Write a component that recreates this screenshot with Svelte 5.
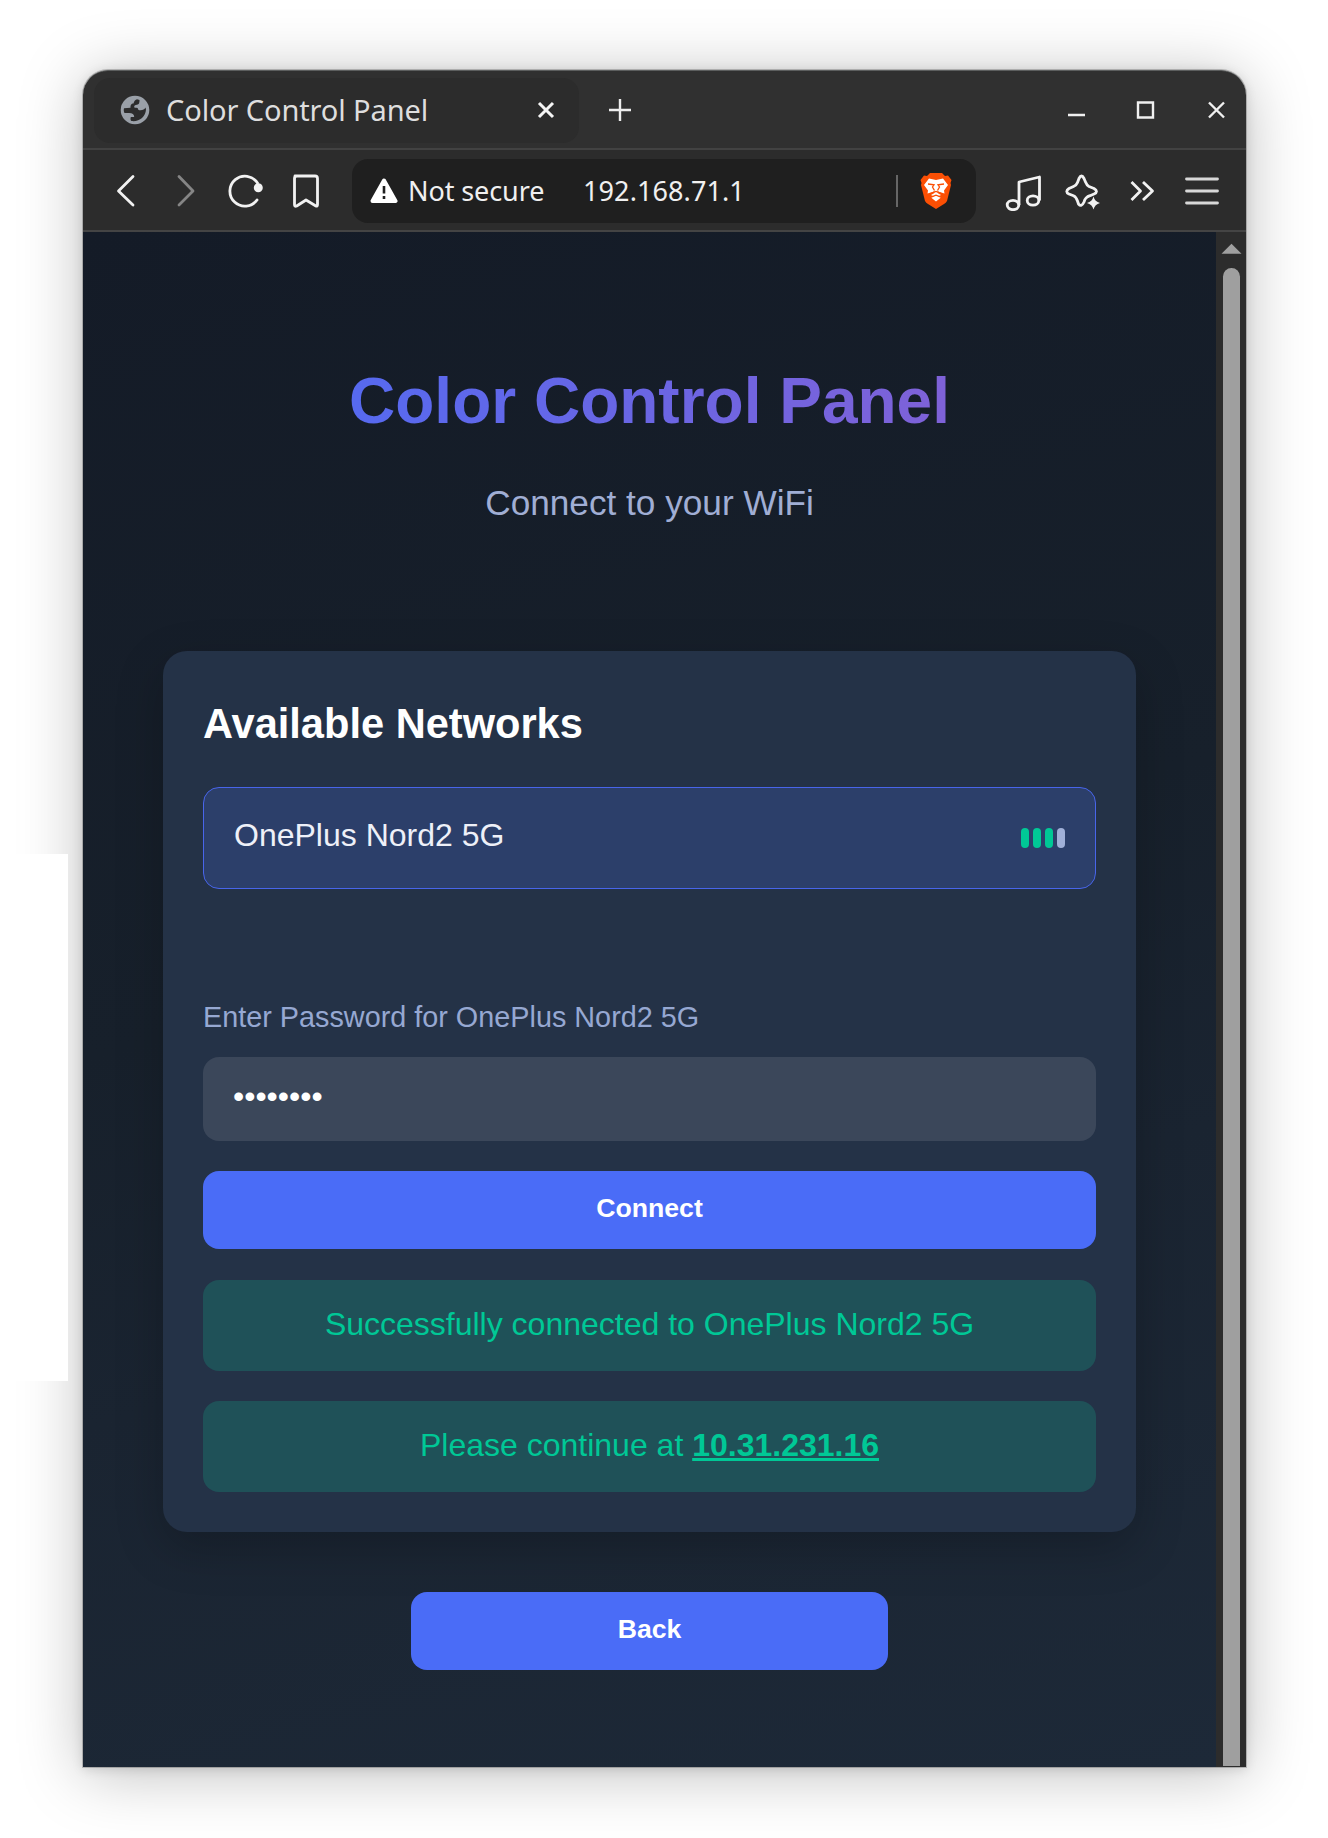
<script>
  const bars = [true, true, true, false];
  const network = 'OnePlus Nord2 5G';
  let password = $state('12345678');
</script>

<div class="desk">
  <div class="patch"></div>
  <div class="window">
    <header class="tabs">
      <div class="tab">
        <svg class="globe" width="30" height="30" viewBox="0 0 30 30">
          <circle cx="15" cy="15" r="14.3" fill="#9aa0a8" />
          <path d="M17 4.200 C14.500 5 14 6.500 13.500 8.500 C10.500 8.500 10.500 11 10.500 12.800 L4 13.200 C3.500 15 3.800 16.500 4.500 18 L9 18 C12.500 18 14.200 19.300 14.200 22 L10.800 22 C10.200 24 10.500 25.500 11.500 26 C19 27 25.500 22 26 14.500 L25.500 12.500 C24.500 14.500 23 15.200 20.500 15.200 C18.500 15.200 18 14.800 17.700 12.900 C15 12.800 14.500 12.500 14.200 12.200 C14.200 10.500 14.800 10 17 9.800 C19 9.500 19.500 8 19.500 5 Z" fill="#2c2c2c" />
        </svg>
        <span class="tabname">Color Control Panel</span>
        <svg class="tabx" width="18" height="18" viewBox="0 0 18 18"><path d="M2 2 16 16M16 2 2 16" /></svg>
      </div>
      <svg class="plus" width="24" height="24" viewBox="0 0 24 24"><path d="M12 1V23M1 12H23" /></svg>
      <svg class="controls" width="160" height="20" viewBox="0 0 160 20">
        <path d="M1 15H18M71 2.500H86V17.500H71ZM142 2.500 157 17.500M157 2.500 142 17.500" />
      </svg>
    </header>
    <nav class="toolbar">
      <svg class="navicons" width="216" height="40" viewBox="0 0 216 40">
        <g fill="none" stroke="#f2f2f2" stroke-width="2.800" stroke-linecap="round" stroke-linejoin="round">
          <path d="M22 5.500 7.500 20 22 34" />
          <path d="M68 5.500 82 20 68 34" stroke="#858585" />
          <path d="M146 29 A15 15 0 1 1 146.500 12" />
          <path d="M184 5 H204 Q206.500 5 206.500 7.500 V33.500 Q206.500 36 204.500 34.800 L195 29 185.700 35 Q183.500 36 183.500 33.500 V7.500 Q183.500 5 186 5" />
        </g>
        <circle cx="147.300" cy="16.800" r="4.500" fill="#f2f2f2" />
      </svg>
      <div class="address">
        <svg width="28" height="26" viewBox="0 0 28 26">
          <path d="M14 2.500 25.500 23 H2.500Z" fill="#fff" stroke="#fff" stroke-width="4" stroke-linejoin="round" />
          <path d="M14 8V15.500M14 18V21" stroke="#1f1f1f" stroke-width="2.600" />
        </svg>
        <span class="insecure">Not secure</span>
        <span class="ip">192.168.71.1</span>
        <i class="divider"></i>
        <svg class="lion" width="32" height="37" viewBox="0 0 32 37">
          <path d="M10 1H22L25 4 28 3.500 31.500 8 30.500 11 31 13 27 29 Q26 31 24 32 L16 37 8 32 Q6 31 5 29 L1 13 1.500 11 .5 8 4 3.500 7 4Z" fill="#fb4f04" />
          <path d="M9 6.500 16 8 23 6.500 28 13 24 18.500 24.500 21.500 19.500 20 17.500 19 V21 L21 23 16 25.500 11 23 14.500 21 V19 L12.500 20 7.500 21.500 8 18.500 4 13Z M11 25.500 16 23.500 21 25.500 16 29.500Z" fill="#fff" />
          <path d="M8 12 14 12.800 12.500 15 14.500 18.500M24 12 18 12.800 19.500 15 17.500 18.500M10.500 21.500 16 19.500 21.500 21.500M11 25.200 16 23.200 21 25.200" fill="none" stroke="#fb4f04" stroke-width="1.300" />
        </svg>
      </div>
      <svg class="actions" width="216" height="40" viewBox="0 0 216 40">
        <g fill="none" stroke="#f2f2f2" stroke-width="2.800" stroke-linejoin="round">
          <path d="M14 34V11L34.500 6V29.500" />
          <ellipse cx="8" cy="34" rx="5.800" ry="4.700" />
          <ellipse cx="28" cy="29.500" rx="5.800" ry="4.700" />
          <path d="M73.500 33 Q76.500 36.500 79 31 C80 27.500 81 26 85 24.700 L89 23 Q94 20.500 89 17.500 L84 15.500 C82 14.500 81.500 13.500 80.500 11 L79 7.500 Q76.500 2.500 74 7.500 L72.500 11.500 C71.500 14 71 14.500 68.500 15.500 L64 17.500 Q59.500 20.500 64 23 L68.500 24.700 C70.500 25.500 71.500 27 72.500 30 Z" />
          <path d="M126.500 11 135.500 20 126.500 29M138 11 147.500 20 138 29" />
          <path d="M181.500 8H212.500M181.500 20H212.500M181.500 32H212.500" stroke="#d8d8d8" stroke-linecap="round" />
        </g>
        <path d="M88.500 25.500Q89.800 30.700 95 32Q89.800 33.300 88.500 38.500Q87.200 33.300 82 32Q87.200 30.700 88.500 25.500Z" fill="#f2f2f2" />
      </svg>
    </nav>
    <div class="view">
      <main>
        <h1>Color Control Panel</h1>
        <p class="sub">Connect to your WiFi</p>
        <section class="card">
          <h2>Available Networks</h2>
          <div class="network">
            <span>{network}</span>
            <div class="signal">
              {#each bars as on}<i class:on></i>{/each}
            </div>
          </div>
          <label for="pw">Enter Password for {network}</label>
          <input id="pw" type="password" bind:value={password} />
          <button>Connect</button>
          <div class="notice">Successfully connected to {network}</div>
          <div class="notice">Please continue at <a href="#continue">10.31.231.16</a></div>
        </section>
        <button class="back">Back</button>
      </main>
      <aside class="scroll">
        <svg width="21" height="11" viewBox="0 0 22 11"><path d="M0.500 11 11 0.500 21.500 11Z" fill="#9f9f9f" /></svg>
        <div class="thumb"></div>
      </aside>
    </div>
  </div>
</div>

<style>
  :global(body) { margin: 0; background: #fff; }
  * { box-sizing: border-box; }
  .desk {
    position: relative;
    width: 1328px;
    height: 1838px;
    padding: 70px 82px 71px 83px;
    overflow: hidden;
    background: #fff;
    font-family: "Liberation Sans", Arial, sans-serif;
  }
  .patch { position: absolute; z-index: 1; left: 0; top: 854px; width: 68px; height: 527px; background: #fff; }
  .window {
    height: 1697px;
    border-radius: 25px 25px 0 0;
    box-shadow: 0 6px 64px rgba(0, 0, 0, 0.26), 0 2px 12px rgba(0, 0, 0, 0.13), 0 0 0 1px rgba(0, 0, 0, 0.2);
  }
  .tabs {
    display: flex;
    align-items: center;
    height: 80px;
    padding: 1px 19px 0 11px;
    background: #303030;
    border-top: 1px solid #5c5e5e;
    border-bottom: 2px solid #424242;
    border-radius: 25px 25px 0 0;
  }
  .tab {
    display: flex;
    align-items: center;
    width: 485px;
    height: 65px;
    padding: 0 24px 0 26px;
    background: #2c2c2c;
    border-radius: 16px;
  }
  .tabname { margin: -2px 0 0 16px; font: 29px "Noto Sans", sans-serif; letter-spacing: -0.110px; color: #dedede; white-space: nowrap; }
  .tabx { margin-left: auto; stroke: #f5f5f5; stroke-width: 3; }
  .plus { margin-left: 29px; stroke: #eee; stroke-width: 2.400; }
  .controls { margin-left: auto; fill: none; stroke: #f0f0f0; stroke-width: 2.400; }
  .toolbar {
    display: flex;
    align-items: center;
    height: 82px;
    padding: 1px 25px 0 28px;
    background: #2c2c2c;
    border-bottom: 2px solid #444;
  }
  .navicons { margin-right: 25px; }
  .address {
    display: flex;
    align-items: center;
    width: 624px;
    height: 64px;
    padding: 0 24px 0 18px;
    border-radius: 16px;
    background: #1f1f1f;
    color: #f0f0f0;
    font: 27px "Noto Sans", sans-serif;
    white-space: nowrap;
  }
  .insecure { width: 175px; margin-left: 10px; letter-spacing: -0.100px; }
  .ip { letter-spacing: 0.100px; }
  .divider { width: 2px; height: 32px; margin-left: auto; background: #666; }
  .lion { margin-left: 22px; }
  .actions { margin-left: auto; }
  .view { display: flex; height: 1535px; }
  main {
    display: flex;
    flex-direction: column;
    align-items: center;
    width: 1133px;
    padding: 131px 80px 0;
    background: linear-gradient(165deg, #141b27 0%, #17202b 45%, #1a2431 65%, #1d2938 100%);
  }
  h1 {
    width: 973px;
    margin: 0;
    font-size: 64px;
    line-height: 76px;
    text-align: center;
    background: linear-gradient(90deg, #4a6cf7, #8b5fd0);
    background-clip: text;
    color: transparent;
  }
  .sub { margin: 43px 0 0; font-size: 35.200px; line-height: 42px; color: #a0aed4; }
  .card {
    display: flex;
    flex-direction: column;
    width: 973px;
    height: 881px;
    margin-top: 127px;
    padding: 40px;
    border-radius: 24px;
    background: #243247;
    box-shadow: 0 16px 48px rgba(0, 0, 0, 0.22);
  }
  h2 { margin: 9px 0 0; font-size: 41.600px; line-height: 48px; color: #fff; }
  .network {
    display: flex;
    align-items: center;
    justify-content: space-between;
    height: 102px;
    margin-top: 39px;
    padding: 0 30px 4px 30px;
    border: 1.500px solid #4865ea;
    border-radius: 16px;
    background: #2c3f6a;
    font-size: 32px;
    color: #eef0f8;
  }
  .signal { display: flex; gap: 3.500px; padding-top: 4px; }
  .signal i { width: 8.500px; height: 20px; border-radius: 4.250px; background: #a0b0d8; }
  .signal .on { background: #00c896; }
  label { margin-top: 111px; font-size: 28.800px; line-height: 34px; color: #96a8d2; }
  input {
    height: 84px;
    margin-top: 23px;
    padding: 0 30px 4px;
    border: 0;
    border-radius: 16px;
    outline: 0;
    background: #3b475a;
    color: #fff;
    font: 32px "Liberation Sans", sans-serif;
  }
  button {
    height: 79px;
    margin-top: 30px;
    padding: 0 0 3px;
    border: 0;
    border-radius: 16px;
    background: #4a6cf7;
    color: #fff;
    font: bold 26.667px "Liberation Sans", sans-serif;
  }
  .notice {
    height: 91px;
    margin-top: 31px;
    border-radius: 16px;
    background: #1f5158;
    color: #00c896;
    font-size: 32px;
    line-height: 88px;
    text-align: center;
  }
  .notice + .notice { margin-top: 30px; line-height: 89px; }
  a { color: inherit; font-weight: bold; }
  .back { width: 477px; height: 78px; margin-top: 60px; }
  .scroll { width: 30px; padding: 11px 0 0 5px; background: #2c2c2c; }
  .scroll svg { display: block; }
  .thumb { width: 17.500px; height: 1498px; margin: 14px 0 0 1.500px; border-radius: 9px 9px 0 0; background: #9f9f9f; }
</style>
